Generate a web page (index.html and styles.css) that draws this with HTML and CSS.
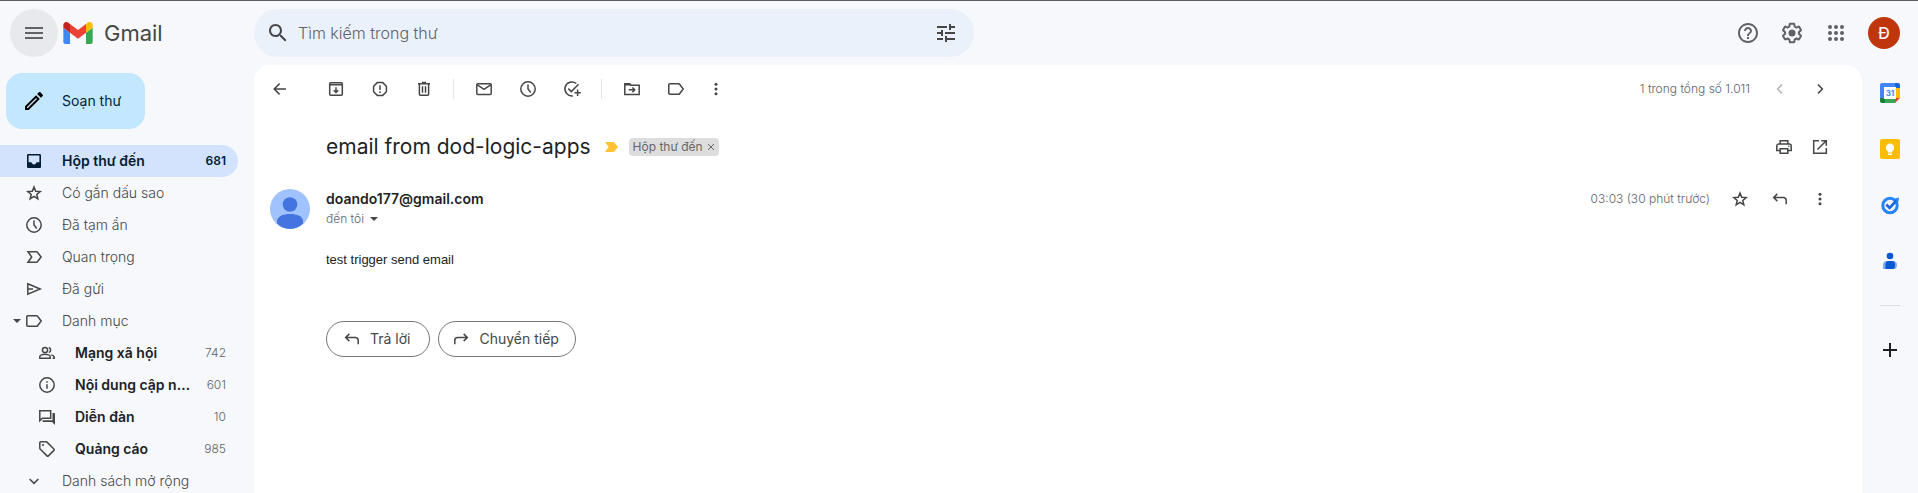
FILE: index.html
```html
<!DOCTYPE html>
<html lang="vi">
<head>
<meta charset="utf-8">
<title>Gmail</title>
<link rel="stylesheet" href="styles.css">
</head>
<body>
<svg class="sprite" aria-hidden="true">
  <symbol id="i-clock" viewBox="0 0 20 20"><circle cx="10" cy="10" r="7.2"/><path d="M10 5.5V10l2.8 3.4"/></symbol>
  <symbol id="i-label" viewBox="0 0 20 20"><path d="M3.8 4.7h8.6c.5 0 .9.2 1.2.6l3.6 4.7-3.6 4.7c-.3.4-.7.6-1.2.6H3.8a1 1 0 0 1-1-1V5.700a1 1 0 0 1 1-1z"/></symbol>
  <symbol id="i-star" viewBox="0 0 20 20"><path d="M10 4l1.700 4.200 4.500.35-3.450 2.900 1.100 4.400L10 13.450l-3.850 2.400 1.100-4.400L3.800 8.550l4.500-.35z"/></symbol>
  <symbol id="i-reply" viewBox="0 0 20 20"><path d="M7.300 4.900L3.700 8.500l3.600 3.600M3.900 8.500h9.300a3 3 0 0 1 3 3v3.700"/></symbol>
  <symbol id="i-more" viewBox="0 0 20 20"><g class="solid"><circle cx="10" cy="5.200" r="1.500"/><circle cx="10" cy="10" r="1.500"/><circle cx="10" cy="14.800" r="1.500"/></g></symbol>
</svg>

<div class="app">
  <header class="topbar">
    <div class="brand">
      <button class="menu-btn" aria-label="Trình đơn chính"><svg class="icon-24 fill" viewBox="0 0 24 24"><path d="M3 18h18v-2H3v2zm0-5h18v-2H3v2zm0-7v2h18V6H3z"/></svg></button>
      <a class="logo" href="#">
        <svg class="logo-mark" viewBox="52 42 88 66"><path fill="#4285f4" d="M58 108h14V74L52 59v43c0 3.320 2.690 6 6 6"/><path fill="#34a853" d="M120 108h14c3.320 0 6-2.690 6-6V59l-20 15"/><path fill="#fbbc04" d="M120 48v26l20-15v-8c0-7.420-8.470-11.650-14.400-7.200"/><path fill="#ea4335" d="M72 74V48l24 18 24-18v26L96 92"/><path fill="#c5221f" d="M52 51v8l20 15V48l-5.600-4.200c-5.940-4.450-14.400-.220-14.400 7.200"/></svg>
        <span>Gmail</span>
      </a>
    </div>
    <form class="search" role="search">
      <button type="button" class="plain" aria-label="Tìm kiếm"><svg class="icon-24 fill" viewBox="0 0 24 24"><path d="M15.500 14h-.790l-.280-.270C15.410 12.590 16 11.110 16 9.500 16 5.910 13.090 3 9.500 3S3 5.910 3 9.500 5.910 16 9.500 16c1.610 0 3.090-.590 4.230-1.570l.270.280v.790l5 4.990L20.490 19l-4.990-5zm-6 0C7.010 14 5 11.990 5 9.500S7.010 5 9.500 5 14 7.010 14 9.500 11.990 14 9.500 14z"/></svg></button>
      <input type="text" placeholder="Tìm kiếm trong thư" aria-label="Tìm kiếm trong thư">
      <button type="button" class="plain" aria-label="Hiển thị tùy chọn tìm kiếm"><svg class="icon-24 fill" viewBox="0 0 24 24"><path d="M3 17v2h6v-2H3zM3 5v2h10V5H3zm10 16v-2h8v-2h-8v-2h-2v6h2zM7 9v2H3v2h4v2h2V9H7zm14 4v-2H11v2h10zm-6-4h2V7h4V5h-4V3h-2v6z"/></svg></button>
    </form>
    <div class="top-actions">
      <button class="btn" aria-label="Hỗ trợ"><svg class="icon-24 fill" viewBox="0 0 24 24"><path d="M11 18h2v-2h-2v2zm1-16C6.480 2 2 6.480 2 12s4.480 10 10 10 10-4.480 10-10S17.520 2 12 2zm0 18c-4.410 0-8-3.590-8-8s3.590-8 8-8 8 3.590 8 8-3.590 8-8 8zm0-14c-2.210 0-4 1.790-4 4h2c0-1.100.900-2 2-2s2 .900 2 2c0 2-3 1.750-3 5h2c0-2.250 3-2.500 3-5 0-2.210-1.790-4-4-4z"/></svg></button>
      <button class="btn" aria-label="Cài đặt"><svg class="icon-24 fill" viewBox="0 0 24 24"><path d="M13.85 22.25h-3.7c-.74 0-1.36-.54-1.45-1.27l-.27-1.89c-.27-.14-.53-.29-.79-.46l-1.8.72c-.7.26-1.47-.03-1.81-.65L2.2 15.53c-.35-.66-.2-1.44.36-1.88l1.53-1.19c-.01-.15-.02-.3-.02-.46 0-.15.01-.31.02-.46l-1.52-1.19c-.59-.45-.74-1.26-.37-1.88l1.85-3.19c.34-.62 1.11-.9 1.79-.63l1.81.73c.26-.17.52-.32.78-.46l.27-1.91c.09-.7.71-1.25 1.44-1.25h3.7c.74 0 1.36.54 1.45 1.27l.27 1.89c.27.14.53.29.79.46l1.8-.72c.71-.26 1.48.03 1.82.65l1.84 3.18c.36.66.2 1.44-.36 1.88l-1.52 1.19c.01.15.02.3.02.46s-.01.31-.02.46l1.52 1.19c.56.45.72 1.23.37 1.86l-1.86 3.22c-.34.62-1.11.9-1.8.63l-1.8-.72c-.26.17-.52.32-.78.46l-.27 1.91c-.1.68-.72 1.22-1.46 1.22zm-3.23-2h2.76l.37-2.55.53-.22c.44-.18.88-.44 1.34-.78l.45-.34 2.38.96 1.38-2.4-2.03-1.58.07-.56c.03-.26.06-.51.06-.78s-.03-.53-.06-.78l-.07-.56 2.03-1.58-1.39-2.4-2.39.96-.45-.35c-.42-.32-.87-.58-1.33-.77l-.52-.22-.37-2.55h-2.76l-.37 2.55-.53.21c-.44.19-.88.44-1.34.79l-.45.33-2.38-.95-1.39 2.39 2.03 1.58-.07.56a7 7 0 0 0-.06.79c0 .26.02.53.06.78l.07.56-2.03 1.58 1.38 2.4 2.39-.96.45.35c.43.33.86.58 1.33.77l.53.22.38 2.55z"/><circle cx="12" cy="12" r="3.500"/></svg></button>
      <button class="btn" aria-label="Các ứng dụng của Google"><svg class="icon-24 fill" viewBox="0 0 24 24"><circle cx="6" cy="6" r="2"/><circle cx="12" cy="6" r="2"/><circle cx="18" cy="6" r="2"/><circle cx="6" cy="12" r="2"/><circle cx="12" cy="12" r="2"/><circle cx="18" cy="12" r="2"/><circle cx="6" cy="18" r="2"/><circle cx="12" cy="18" r="2"/><circle cx="18" cy="18" r="2"/></svg></button>
      <button class="account" aria-label="Tài khoản Google">Đ</button>
    </div>
  </header>

  <aside class="sidebar">
    <button class="compose"><svg class="icon-24 fill" viewBox="0 0 24 24"><path d="M14.060 9.020l.920.920L5.920 19H5v-.920l9.060-9.060M17.660 3c-.250 0-.510.100-.700.290l-1.830 1.830 3.750 3.750 1.830-1.830c.390-.390.390-1.020 0-1.410l-2.340-2.340c-.200-.200-.450-.290-.710-.290zm-3.600 3.190L3 17.250V21h3.750L17.810 9.940l-3.750-3.750z"/></svg>Soạn thư</button>
    <nav class="nav">
      <a class="nav-item active" href="#"><svg class="icon" viewBox="0 0 20 20"><path class="solid" fill-rule="evenodd" d="M4.300 3h11.400c.700 0 1.300.600 1.300 1.300v11.400c0 .700-.600 1.300-1.300 1.300H4.300c-.700 0-1.300-.600-1.300-1.300V4.300C3 3.600 3.600 3 4.300 3zm.3 1.600v6.700h2.900c.300 1.300 1.300 2.200 2.500 2.200s2.200-.9 2.500-2.200h2.900V4.600z"/></svg><span class="name">Hộp thư đến</span><span class="count">681</span></a>
      <a class="nav-item" href="#"><svg class="icon"><use href="#i-star"/></svg><span class="name">Có gắn dấu sao</span></a>
      <a class="nav-item" href="#"><svg class="icon"><use href="#i-clock"/></svg><span class="name">Đã tạm ẩn</span></a>
      <a class="nav-item" href="#"><svg class="icon" viewBox="0 0 20 20"><path d="M4 4.700h8.400c.4 0 .8.200 1 .5l3.700 4.800-3.700 4.800c-.2.300-.6.500-1 .5H4L7.700 10z"/></svg><span class="name">Quan trọng</span></a>
      <a class="nav-item" href="#"><svg class="icon" viewBox="0 0 20 20"><path d="M3.800 4.800L16.200 10 3.800 15.200zM4 10h5"/></svg><span class="name">Đã gửi</span></a>
      <a class="nav-item has-caret" href="#"><span class="caret"></span><svg class="icon"><use href="#i-label"/></svg><span class="name">Danh mục</span></a>
      <a class="nav-item sub" href="#"><svg class="icon" viewBox="0 0 20 20"><circle cx="8" cy="7" r="2.600"/><path d="M2.800 15.200v-1.400c0-1.600 3-2.500 5.200-2.500s5.200.9 5.200 2.500v1.400zM11.800 4.500a2.600 2.600 0 0 1 0 5M14.300 11.900c1.800.6 2.900 1.200 2.900 2.200v1.100h-1.600"/></svg><span class="name">Mạng xã hội</span><span class="count">742</span></a>
      <a class="nav-item sub" href="#"><svg class="icon" viewBox="0 0 20 20"><circle cx="10" cy="10" r="7.200"/><path d="M10 9.200v4.600M10 6.200v1.500"/></svg><span class="name">Nội dung cập nhật</span><span class="count">601</span></a>
      <a class="nav-item sub" href="#"><svg class="icon" viewBox="0 0 20 20"><path d="M2.800 3.800h10.900v7.400H5.300l-2.500 2.500z"/><path class="solid" d="M15.500 6H17c.600 0 1 .4 1 1v11l-3-3H6.500c-.600 0-1-.4-1-1v-.8h10z"/></svg><span class="name">Diễn đàn</span><span class="count">10</span></a>
      <a class="nav-item sub" href="#"><svg class="icon" viewBox="0 0 20 20"><path d="M2.800 3.800c0-.600.400-1 1-1h5.400c.300 0 .600.100.800.300l6.900 6.900c.400.400.400 1 0 1.400l-5.500 5.500c-.400.400-1 .400-1.400 0L3.100 10c-.200-.2-.3-.5-.3-.8z"/><circle class="solid" cx="6" cy="6" r="1.100"/></svg><span class="name">Quảng cáo</span><span class="count">985</span></a>
      <a class="nav-item" href="#"><svg class="icon" viewBox="0 0 20 20"><path d="M5.600 8l4.400 4.400L14.400 8"/></svg><span class="name">Danh sách mở rộng</span></a>
    </nav>
  </aside>

  <main class="mail">
    <div class="toolbar">
      <button class="btn back" aria-label="Quay lại"><svg class="icon" viewBox="0 0 20 20"><path d="M16 10H4.500M9.600 4.600L4.200 10l5.400 5.400"/></svg></button>
      <button class="btn" aria-label="Lưu trữ"><svg class="icon" viewBox="0 0 20 20"><rect x="3.700" y="3.700" width="12.600" height="12.600" rx="1"/><path d="M4 5.700h12M10 8.200v5M7.700 11.200l2.300 2.300 2.300-2.300"/></svg></button>
      <button class="btn" aria-label="Báo cáo spam"><svg class="icon" viewBox="0 0 20 20"><path d="M7.300 3.600h5.400l3.700 3.700v5.400l-3.700 3.700H7.300l-3.700-3.700V7.300zM10 6.200v4.700M10 12.300v1.600"/></svg></button>
      <button class="btn" aria-label="Xóa"><svg class="icon" viewBox="0 0 20 20"><path d="M4 4.700h12M8 3.600h4M5.400 5v10.300c0 .500.400.900.900.900h7.400c.5 0 .9-.4.9-.9V5M8.500 7.300v6.500M11.500 7.300v6.500"/></svg></button>
      <span class="divider"></span>
      <button class="btn" aria-label="Đánh dấu là chưa đọc"><svg class="icon" viewBox="0 0 20 20"><rect x="2.800" y="4.700" width="14.400" height="10.800" rx="1"/><path d="M3 5.700l7 4.600 7-4.600"/></svg></button>
      <button class="btn" aria-label="Tạm ẩn"><svg class="icon"><use href="#i-clock"/></svg></button>
      <button class="btn" aria-label="Thêm vào việc cần làm"><svg class="icon" viewBox="0 0 20 20"><path d="M10.800 16.900A7 7 0 1 1 14.300 4.500M6.300 9.600l3 3 7.300-7.300M15.600 10.600v6.400M12.400 13.800h6.400"/></svg></button>
      <span class="divider"></span>
      <button class="btn" aria-label="Di chuyển tới"><svg class="icon" viewBox="0 0 20 20"><path d="M2.800 15.400V4.700h4.700l1.600 1.600h8.100v9.100zM6.800 10.800h5.600M10.400 8.500l2.300 2.300-2.300 2.300"/><path class="solid" d="M2.500 4h5.300l2 2.600H2.500z"/></svg></button>
      <button class="btn" aria-label="Nhãn"><svg class="icon"><use href="#i-label"/></svg></button>
      <button class="btn narrow" aria-label="Thêm"><svg class="icon"><use href="#i-more"/></svg></button>
      <span class="pager">1 trong tổng số 1.011</span>
      <button class="btn mid" aria-label="Mới hơn" disabled><svg class="icon" viewBox="0 0 20 20"><path d="M12 5.600L7.600 10l4.400 4.400"/></svg></button>
      <button class="btn mid" aria-label="Cũ hơn"><svg class="icon" viewBox="0 0 20 20"><path d="M8 5.600l4.400 4.400L8 14.400"/></svg></button>
    </div>

    <div class="subject-row">
      <h1>email from dod-logic-apps</h1>
      <svg class="important" viewBox="0 0 13 10"><path d="M0 0h8.200c.5 0 .9.200 1.200.6L13 5 9.400 9.400c-.3.400-.7.600-1.200.6H0l3.600-5z"/></svg>
      <span class="tag">Hộp thư đến<button aria-label="Xóa nhãn Hộp thư đến"><svg viewBox="0 0 8 8"><path d="M1 1l6 6M7 1L1 7"/></svg></button></span>
      <span class="spacer"></span>
      <button class="btn narrow" aria-label="In tất cả"><svg class="icon" viewBox="0 0 20 20"><path d="M6.200 7V3.700h7.600V7M6 13.500H2.800V9c0-1.100.9-2 2-2h10.400c1.100 0 2 .9 2 2v4.500H14M6.200 11.700h7.600v4.600H6.200z"/><circle class="solid" cx="14.800" cy="9.300" r=".8"/></svg></button>
      <button class="btn narrow" aria-label="Trong cửa sổ mới"><svg class="icon" viewBox="0 0 20 20"><path d="M9 3.700H3.700v12.600h12.600V11M11.300 3.700h5v5M16 4L7.500 12.500"/></svg></button>
    </div>

    <article class="message">
      <svg class="avatar" viewBox="0 0 40 40"><circle cx="20" cy="20" r="20" fill="#a0c3ff"/><circle cx="20" cy="15.500" r="7.300" fill="#4374e0"/><path fill="#4374e0" d="M7 34.500v-2.300C7 27.600 13 25 20 25s13 2.600 13 7.200v2.300A20 20 0 0 1 20 40 20 20 0 0 1 7 34.500z"/></svg>
      <div class="content">
        <div class="meta">
          <div class="sender">
            <strong>doando177@gmail.com</strong>
            <button class="recipient">đến tôi<span class="caret"></span></button>
          </div>
          <time>03:03 (30 phút trước)</time>
          <button class="btn mid" aria-label="Gắn dấu sao"><svg class="icon"><use href="#i-star"/></svg></button>
          <button class="btn mid" aria-label="Trả lời thư"><svg class="icon"><use href="#i-reply"/></svg></button>
          <button class="btn mid" aria-label="Tùy chọn khác"><svg class="icon"><use href="#i-more"/></svg></button>
        </div>
        <p class="body-text">test trigger send email</p>
        <div class="replies">
          <button class="pill"><svg class="icon"><use href="#i-reply"/></svg>Trả lời</button>
          <button class="pill forward"><svg class="icon flip"><use href="#i-reply"/></svg>Chuyển tiếp</button>
        </div>
      </div>
    </article>
  </main>

  <aside class="panel">
    <button aria-label="Lịch"><svg viewBox="0 0 20 20"><path fill="#4285f4" d="M2 0h13v5H5v10H0V2C0 .900.900 0 2 0z"/><path fill="#1967d2" d="M15 0h3c1.100 0 2 .900 2 2v3h-5z"/><path fill="#fbbc04" d="M15 5h5v10h-5z"/><path fill="#34a853" d="M5 15h10v5H5z"/><path fill="#188038" d="M0 15h5v5H2c-1.100 0-2-.900-2-2z"/><path fill="#ea4335" d="M15 15h5l-5 5z"/><path fill="#fff" d="M4 4h12v12H4z"/><text x="10" y="13" text-anchor="middle">31</text></svg></button>
    <button aria-label="Keep"><svg viewBox="0 0 20 20"><rect width="20" height="20" rx="2" fill="#fbbc04"/><circle cx="10" cy="8.800" r="4.200" fill="#fff"/><path fill="#fff" d="M8 12h4v1.500H8zM8 14.500h4V16H8z"/></svg></button>
    <button aria-label="Tasks"><svg viewBox="0 0 20 20"><circle cx="10" cy="10.500" r="7.200" fill="none" stroke="#2684fc" stroke-width="3"/><path d="M6.300 9.500l3.300 3.300L16.500 5.500" fill="none" stroke="#1a66e0" stroke-width="2.600"/><path fill="#2684fc" d="M15 3.500L19 2.500 18.500 7z"/></svg></button>
    <button aria-label="Danh bạ"><svg viewBox="0 0 20 20"><circle cx="10" cy="5" r="3.300" fill="#0b57d0"/><path fill="#7baaf7" d="M3 18v-4c0-2.500 1.500-4 4-4h6c2.500 0 4 1.500 4 4 0 2-1 4-3 4z"/><path fill="#0b57d0" d="M5.500 18v-4c0-2.500 1-4 3-4h3.500c2 0 3 1.500 3 4 0 2-.5 4-2 4z"/></svg></button>
    <hr>
    <button class="add" aria-label="Tải tiện ích bổ sung"><svg viewBox="0 0 20 20"><path d="M10 3v14M3 10h14" fill="none" stroke="#1f1f1f" stroke-width="2"/></svg></button>
  </aside>
</div>
</body>
</html>
```

FILE: styles.css
```css
* { box-sizing: border-box; }

body {
  margin: 0;
  background: #f6f8fc;
  color: #202124;
  font-family: Inter, Roboto, "Noto Sans", sans-serif;
  font-size: 14px;
  line-height: 20px;
}

button {
  padding: 0;
  border: 0;
  background: none;
  color: inherit;
  font: inherit;
}

a { color: inherit; text-decoration: none; }

.sprite { display: none; }

.app {
  display: grid;
  grid-template: 64px 1fr / 254px 1fr 56px;
  height: 100vh;
  border-top: 1px solid #5f5b66;
  overflow: hidden;
}

.icon {
  flex: none;
  display: block;
  width: 20px;
  height: 20px;
  fill: none;
  stroke: currentColor;
  stroke-width: 1.5;
}

.icon .solid,
symbol .solid { fill: currentColor; stroke: none; }

.icon-24 { flex: none; display: block; width: 24px; height: 24px; }

.fill { fill: currentColor; }

.btn {
  flex: none;
  display: flex;
  align-items: center;
  justify-content: center;
  width: 44px;
  height: 20px;
  color: #444746;
}

.btn.mid { width: 40px; }
.btn.narrow { width: 36px; }
.btn:disabled { color: #b4b5b5; }

.caret {
  width: 0;
  border: 4px solid transparent;
  border-top-color: #444746;
  border-bottom: 0;
}

/* Top bar */

.topbar {
  grid-column: 1 / -1;
  display: flex;
  align-items: center;
}

.brand {
  flex: none;
  display: flex;
  align-items: center;
  gap: 5px;
  width: 254px;
  padding-left: 10px;
}

.menu-btn {
  display: flex;
  align-items: center;
  justify-content: center;
  width: 48px;
  height: 48px;
  border-radius: 50%;
  background: #e8e9ec;
  color: #5f6368;
}

.logo {
  display: flex;
  align-items: center;
  gap: 11px;
  color: #444746;
  font-size: 22px;
  line-height: 28px;
}

.logo-mark { width: 30px; height: 22px; }

.search {
  flex: 0 1 720px;
  display: flex;
  align-items: center;
  gap: 8px;
  height: 48px;
  padding: 0 16px 0 12px;
  border-radius: 24px;
  background: #eaf1fb;
  color: #444746;
}

.search input {
  flex: 1;
  min-width: 0;
  padding: 0;
  border: 0;
  outline: 0;
  background: none;
  color: #202124;
  font: inherit;
  font-size: 16px;
  font-weight: 300;
  line-height: 24px;
}

.search input::placeholder { color: #5f6368; opacity: 1; }

.top-actions {
  display: flex;
  align-items: center;
  margin-left: auto;
  padding-right: 18px;
}

.top-actions .btn { color: #5f6368; }

.account {
  width: 32px;
  height: 32px;
  margin-left: 10px;
  border-radius: 50%;
  background: #bf360c;
  color: #fff;
  font-size: 16px;
  font-weight: 500;
}

/* Sidebar */

.sidebar { padding: 8px 16px 0 0; overflow: hidden; }

.compose {
  display: flex;
  align-items: center;
  gap: 16px;
  height: 56px;
  margin-left: 6px;
  padding: 0 24px 0 16px;
  border-radius: 16px;
  background: #c2e7ff;
  color: #001d35;
}

.compose svg { color: #000; }

.nav { margin-top: 16px; }

.nav-item {
  display: flex;
  align-items: center;
  height: 32px;
  padding: 0 12px 0 24px;
  border-radius: 0 16px 16px 0;
  color: #444746;
  font-weight: 300;
}

.nav-item .name {
  flex: 1;
  min-width: 0;
  margin-left: 18px;
  overflow: hidden;
  text-overflow: ellipsis;
  white-space: nowrap;
}

.nav-item .count { font-size: 12px; color: #5f6368; }

.nav-item.active { background: #d3e3fd; color: #001d35; font-weight: 600; }
.nav-item.active .count { color: #001d35; }

.has-caret { padding-left: 13px; }
.has-caret .caret { margin-right: 3px; }

.sub { padding-left: 37px; }
.sub .name { margin-right: 8px; font-weight: 600; color: #202124; }
.sub .count { min-width: 24px; text-align: right; }

/* Message */

.mail {
  min-width: 0;
  border-radius: 16px 16px 0 0;
  background: #fff;
}

.toolbar {
  display: flex;
  align-items: center;
  height: 48px;
  padding: 0 22px 0 4px;
}

.back { margin-right: 12px; }

.divider {
  width: 1px;
  height: 20px;
  margin: 0 8px 0 7px;
  background: #e4e5e7;
}

.pager {
  margin: 0 10px 0 auto;
  color: #5f6368;
  font-size: 12px;
  font-weight: 300;
}

.subject-row {
  display: flex;
  align-items: center;
  height: 68px;
  padding: 0 24px 0 72px;
}

h1 {
  margin: 0;
  color: #1f1f1f;
  font-size: 21px;
  font-weight: 400;
  line-height: 28px;
}

.important {
  width: 13px;
  height: 10px;
  margin: 0 11px 0 14px;
  fill: #ffc233;
}

.tag {
  display: flex;
  align-items: center;
  gap: 4px;
  height: 18px;
  padding: 0 4px;
  border-radius: 4px;
  background: #ddd;
  color: #666;
  font-size: 12px;
}

.tag svg {
  display: block;
  width: 8px;
  height: 8px;
  fill: none;
  stroke: #666;
}

.spacer { flex: 1; }

.message { display: flex; gap: 16px; padding: 8px 22px 0 16px; }

.avatar { flex: none; width: 40px; height: 40px; }

.content { flex: 1; min-width: 0; }

.meta { display: flex; align-items: flex-start; }

.sender { flex: 1; display: flex; flex-direction: column; align-items: flex-start; }

.sender strong { color: #1f1f1f; font-weight: 600; }

.recipient {
  display: flex;
  align-items: center;
  gap: 6px;
  color: #5f6368;
  font-size: 12px;
  font-weight: 300;
}

time { margin-right: 10px; color: #5f6368; font-size: 12px; font-weight: 300; }

.body-text {
  margin: 21px 0 51px;
  color: #222;
  font-family: "Liberation Sans", Arial, sans-serif;
  font-size: 13px;
}

.replies { display: flex; gap: 8px; }

.pill {
  display: flex;
  align-items: center;
  gap: 8px;
  height: 36px;
  padding: 0 19px 0 15px;
  border: 1px solid #747775;
  border-radius: 18px;
  color: #444746;
}

.pill.forward { padding: 0 16px 0 12px; }

.flip { transform: scaleX(-1); }

/* Side panel */

.panel {
  display: flex;
  flex-direction: column;
  align-items: center;
  gap: 36px;
  padding-top: 18px;
}

.panel button,
.panel svg { display: block; width: 20px; height: 20px; }

.panel text {
  fill: #4285f4;
  font-size: 8px;
  font-weight: 700;
}

.panel hr {
  width: 20px;
  margin: -2px 0 -2px;
  border: 0;
  border-top: 1px solid #dadce0;
}
```
